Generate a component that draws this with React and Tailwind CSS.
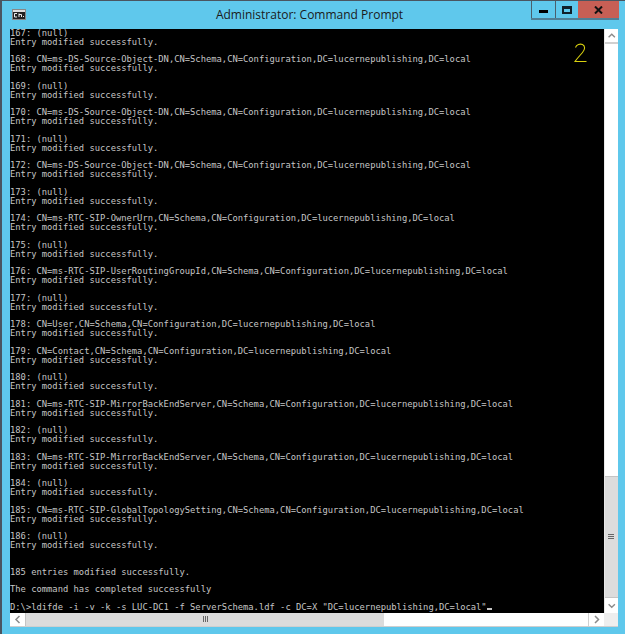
const dn = ",CN=Schema,CN=Configuration,DC=lucernepublishing,DC=local";

const entries = [
  [167, "(null)"],
  [168, "CN=ms-DS-Source-Object-DN" + dn],
  [169, "(null)"],
  [170, "CN=ms-DS-Source-Object-DN" + dn],
  [171, "(null)"],
  [172, "CN=ms-DS-Source-Object-DN" + dn],
  [173, "(null)"],
  [174, "CN=ms-RTC-SIP-OwnerUrn" + dn],
  [175, "(null)"],
  [176, "CN=ms-RTC-SIP-UserRoutingGroupId" + dn],
  [177, "(null)"],
  [178, "CN=User" + dn],
  [179, "CN=Contact" + dn],
  [180, "(null)"],
  [181, "CN=ms-RTC-SIP-MirrorBackEndServer" + dn],
  [182, "(null)"],
  [183, "CN=ms-RTC-SIP-MirrorBackEndServer" + dn],
  [184, "(null)"],
  [185, "CN=ms-RTC-SIP-GlobalTopologySetting" + dn],
  [186, "(null)"],
];

const lines = [];
entries.forEach(([n, text]) => {
  lines.push(n + ": " + text);
  lines.push("Entry modified successfully.");
  lines.push("");
});
lines.push("");
lines.push("185 entries modified successfully.");
lines.push("");
lines.push("The command has completed successfully");
lines.push("");

function Chevron({ d }) {
  return (
    <svg width="15" height="15" viewBox="0 0 15 15" fill="none" stroke="#8a8a8a" strokeWidth="1.5">
      <path d={d} />
    </svg>
  );
}

export default function App() {
  return (
    <div className="relative w-[625px] h-[634px] overflow-hidden bg-[#5fc8ec] border-t border-l-2 border-[#4a5560] flex flex-col">
      {/* title bar */}
      <div className="h-[27.5px] shrink-0 flex items-start relative">
        <div className="w-[8px]" />
        <svg width="14" height="11" viewBox="0 0 14 11" className="mt-[8px] ml-[2px]">
          <rect x="0.5" y="0.5" width="13" height="10" fill="#222" stroke="#888" />
          <rect x="1" y="1" width="12" height="2" fill="#ddd" />
          <path d="M5 4.5H2.5V8H5M7 4.5V8M7 5.5H9.5V8M11 7.5H12" fill="none" stroke="#eee" strokeWidth="1" />
        </svg>
        <div className="flex-1 text-center text-[12px] leading-[28px] text-[#1a1a1a] font-['Open_Sans',sans-serif] pl-[62px]">
          Administrator: Command Prompt
        </div>
        <div className="flex h-[19px] mr-[6px] border-b-2 border-[#4f7f95]">
          <div className="w-[25px] border-l border-r border-[#4a5f6c] flex items-center justify-center">
            <div className="w-[9px] h-[3px] bg-black mt-[3px]" />
          </div>
          <div className="w-[22px] flex items-center justify-center">
            <div className="w-[10px] h-[8px] border-2 border-t-[3px] border-[#10202a]" />
          </div>
          <div className="w-[41px] bg-[#c75f55] flex items-center justify-center">
            <svg width="9" height="8" viewBox="0 0 9 8">
              <path d="M1 0.5L8 7.5M8 0.5L1 7.5" stroke="#111" strokeWidth="2" />
            </svg>
          </div>
        </div>
      </div>

      {/* console + scrollbars */}
      <div className="ml-[8px] w-[608px]">
        <div className="flex h-[584px]">
          <div className="relative w-[593.5px] bg-black overflow-hidden font-['DejaVu_Sans_Mono',monospace] text-[8.8px] leading-[8.83px] text-[#c6c6c6] whitespace-pre pt-[0.5px]">
            {lines.map((line, i) => (
              <div key={i} className="h-[8.83px]">
                {line}
              </div>
            ))}
            <div className="h-[8.83px]">
              {'D:\\>ldifde -i -v -k -s LUC-DC1 -f ServerSchema.ldf -c DC=X "DC=lucernepublishing,DC=local"'}
              <span className="inline-block w-[5px] h-[2px] bg-[#c6c6c6]" />
            </div>
            <svg className="absolute left-[564px] top-[14px]" width="14" height="20" viewBox="0 0 14 20" fill="none">
              <path d="M1.5 4.5C2.5 1.5 6 0.5 8.5 1.5C11.5 3 11 6.5 8.5 9.5C6 12.5 3 15.5 1 18.5H12.5" stroke="#d8d00f" strokeWidth="1.1" />
            </svg>
          </div>

          {/* vertical scrollbar */}
          <div className="w-[14.5px] bg-white flex flex-col border-l border-[#e8e8e8]">
            <div className="h-[15px] border-b-2 border-[#d0d0d0] flex items-center justify-center">
              <Chevron d="M4 9.5L7.5 6L11 9.5" />
            </div>
            <div className="flex-1" />
            <div className="h-[122px] bg-[#dcdcdc] border-y border-[#c4c4c4] flex flex-col gap-[1px] items-center justify-center">
              <div className="w-[6px] h-[1px] bg-[#666]" />
              <div className="w-[6px] h-[1px] bg-[#666]" />
              <div className="w-[6px] h-[1px] bg-[#666]" />
            </div>
            <div className="h-[15px] flex items-center justify-center">
              <Chevron d="M4 6L7.5 9.5L11 6" />
            </div>
          </div>
        </div>

        {/* horizontal scrollbar */}
        <div className="flex h-[14px] bg-white border-b border-[#cfcfcf]">
          <div className="w-[15px] flex items-center justify-center">
            <Chevron d="M9.5 4L6 7.5L9.5 11" />
          </div>
          <div className="w-[359px] bg-[#dcdcdc] border-l border-[#c4c4c4] flex gap-[1px] items-center justify-center">
            <div className="w-[1px] h-[6px] bg-[#666]" />
            <div className="w-[1px] h-[6px] bg-[#666]" />
            <div className="w-[1px] h-[6px] bg-[#666]" />
          </div>
          <div className="flex-1 border-r border-[#d0d0d0]" />
          <div className="w-[15px] flex items-center justify-center">
            <Chevron d="M6 4L9.5 7.5L6 11" />
          </div>
          <div className="w-[14.5px] bg-[#eeeeee]" />
        </div>
      </div>
    </div>
  );
}
